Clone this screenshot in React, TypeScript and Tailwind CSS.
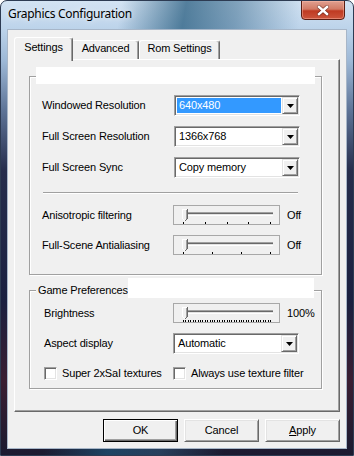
import React from "react";

const sunken =
  "border border-t-[#a0a0a0] border-l-[#a0a0a0] border-r-white border-b-white shadow-[inset_1px_1px_0_#696969,inset_-1px_-1px_0_#e3e3e3]";

function DropButton() {
  return (
    <div className="w-[16px] h-full bg-[#f0f0f0] border border-t-[#e3e3e3] border-l-[#e3e3e3] border-r-[#696969] border-b-[#696969] shadow-[inset_1px_1px_0_#ffffff,inset_-1px_-1px_0_#a0a0a0] flex items-center justify-center">
      <svg width="7" height="4" className="block">
        <polygon points="0,0 7,0 3.5,4" fill="#000" />
      </svg>
    </div>
  );
}

function Combo({ value, selected }: { value: string; selected?: boolean }) {
  return (
    <div className={`w-[126px] h-[21px] bg-white ${sunken} p-[1px] flex`}>
      <div className="flex-1 flex items-center pl-[1px] pr-[1px] py-[1px]">
        <div
          className={`w-full h-full flex items-center pl-[2px] ${
            selected ? "bg-[#3399ff] text-white" : "text-black"
          }`}
        >
          {value}
        </div>
      </div>
      <DropButton />
    </div>
  );
}

function Trackbar({ ticks }: { ticks: number }) {
  const xs = Array.from({ length: ticks }, (_, i) =>
    Math.round(9 + (i * 87) / (ticks - 1))
  );
  return (
    <div className="w-[107px] h-[20px] border border-[#a8a8a8] bg-[#f0f0f0]">
      <svg width="105" height="18" className="block" shapeRendering="crispEdges">
        <rect x="9" y="6" width="90" height="1" fill="#a0a0a0" />
        <rect x="9" y="7" width="90" height="1" fill="#696969" />
        <rect x="9" y="8" width="90" height="1" fill="#e3e3e3" />
        <rect x="9" y="9" width="90" height="1" fill="#ffffff" />
        {xs.map((x, i) => (
          <rect key={i} x={x} y="16" width="1" height="2" fill="#000" />
        ))}
        <polygon points="8,3 14,3 14,12 11,15 8,12" fill="#f0f0f0" />
        <rect x="8" y="3" width="1" height="10" fill="#ffffff" />
        <rect x="8" y="3" width="6" height="1" fill="#ffffff" />
        <rect x="13" y="3" width="1" height="10" fill="#696969" />
        <rect x="12" y="4" width="1" height="9" fill="#a0a0a0" />
        <rect x="12" y="13" width="1" height="1" fill="#696969" />
        <rect x="11" y="14" width="1" height="1" fill="#696969" />
        <rect x="9" y="13" width="1" height="1" fill="#ffffff" />
        <rect x="10" y="14" width="1" height="1" fill="#ffffff" />
      </svg>
    </div>
  );
}

function Checkbox() {
  return <div className={`w-[13px] h-[13px] bg-white ${sunken}`} />;
}

function Button({ label, def, under }: { label: string; def?: boolean; under?: boolean }) {
  return (
    <div
      className={`w-[75px] h-[23px] bg-[#f0f0f0] flex items-center justify-center ${
        def
          ? "border border-black shadow-[inset_1px_1px_0_#ffffff,inset_-1px_-1px_0_#696969,inset_-2px_-2px_0_#a0a0a0]"
          : "border border-t-white border-l-white border-r-[#696969] border-b-[#696969] shadow-[inset_1px_1px_0_#e3e3e3,inset_-1px_-1px_0_#a0a0a0]"
      }`}
    >
      {under ? (
        <span>
          <span className="underline underline-offset-[1px]">{label[0]}</span>
          {label.slice(1)}
        </span>
      ) : (
        label
      )}
    </div>
  );
}

export default function App() {
  return (
    <div className="w-[354px] h-[456px] relative overflow-hidden rounded-t-[7px] border border-[#2d3b52] flex flex-col bg-[linear-gradient(100deg,rgba(0,0,0,0)_28%,rgba(30,85,120,0.7)_43%,rgba(50,100,135,0.5)_55%,rgba(0,0,0,0)_70%),linear-gradient(to_bottom,#d3e3f3_0px,#bcd3ea_28px,#9db8d6_60px,#5d7396_110px,#262d4c_170px,#1b2040_300px,#3a1e32_380px,#1a1a30_456px)] font-['Liberation_Sans',Arial,sans-serif] text-[11px] tracking-[-0.15px] text-black">
      {/* title bar */}
      <div className="h-[28px] relative flex items-start">
        <span className="ml-[7px] mt-[5px] text-[12px] leading-[16px] tracking-[-0.3px] font-['Noto_Sans',sans-serif] text-black [text-shadow:0_0_6px_rgba(255,255,255,0.9)]">
          Graphics Configuration
        </span>
        <div className="absolute right-[8px] top-[-1px] w-[44px] h-[20px] rounded-b-[4px] border border-[#5a1d12] bg-[linear-gradient(to_bottom,#e0a090_0%,#d27a65_45%,#bf3a22_55%,#cc553c_100%)] shadow-[inset_0_0_0_1px_rgba(255,190,175,0.45)] flex items-center justify-center">
          <svg width="14" height="11" className="block">
            <path d="M3 2 L11 9 M11 2 L3 9" stroke="#4a1a12" strokeWidth="4" strokeLinecap="round" opacity="0.55" />
            <path d="M3 2 L11 9 M11 2 L3 9" stroke="#ffffff" strokeWidth="2.4" strokeLinecap="square" />
          </svg>
        </div>
      </div>

      {/* client area */}
      <div className="mx-[6px] mb-[6px] flex-1 bg-[#f0f0f0] border border-[#a7b6c8] flex flex-col">
        {/* tabs */}
        <div className="flex items-end pl-[6px] pt-[7px] h-[29px]">
          <div className="relative z-10 w-[59px] h-[24px] -mb-[2px] bg-[#f0f0f0] border-l border-t border-white border-r border-r-[#696969] rounded-t-[3px] shadow-[inset_-1px_0_0_#a0a0a0] flex justify-center pt-[3px] leading-[13px]">
            Settings
          </div>
          <div className="w-[66px] h-[19px] bg-[#f0f0f0] border-t border-white border-r border-r-[#696969] rounded-tr-[3px] shadow-[inset_-1px_0_0_#a0a0a0] flex justify-center pt-[1px] leading-[13px]">
            Advanced
          </div>
          <div className="w-[81px] h-[19px] bg-[#f0f0f0] border-l border-t border-white border-r border-r-[#696969] rounded-t-[3px] shadow-[inset_-1px_0_0_#a0a0a0] flex justify-center pt-[1px] leading-[13px]">
            Rom Settings
          </div>
        </div>

        {/* tab page */}
        <div className="mx-[6px] h-[353px] border border-t-white border-l-white border-r-[#696969] border-b-[#696969] shadow-[inset_-1px_-1px_0_#a0a0a0] flex flex-col">
          {/* group 1 */}
          <div className="relative ml-[14px] mt-[16px] w-[293px] h-[199px] border border-[#a0a0a0] shadow-[inset_1px_1px_0_#ffffff,1px_1px_0_#ffffff] flex flex-col pl-[12px] pt-[18px]">
            <div className="absolute left-[6px] top-[-10px] w-[279px] h-[17px] bg-white" />
            <div className="flex flex-col gap-[10px]">
              <div className="flex items-center">
                <span className="w-[132px]">Windowed Resolution</span>
                <Combo value="640x480" selected />
              </div>
              <div className="flex items-center">
                <span className="w-[132px]">Full Screen Resolution</span>
                <Combo value="1366x768" />
              </div>
              <div className="flex items-center">
                <span className="w-[132px]">Full Screen Sync</span>
                <Combo value="Copy memory" />
              </div>
            </div>
            <div className="ml-[1px] mt-[14px] w-[255px] h-[2px] border-t border-[#a0a0a0] border-b border-b-white" />
            <div className="flex flex-col gap-[10px] mt-[11px]">
              <div className="flex items-center">
                <span className="w-[131px]">Anisotropic filtering</span>
                <Trackbar ticks={5} />
                <span className="ml-[7px]">Off</span>
              </div>
              <div className="flex items-center">
                <span className="w-[131px]">Full-Scene Antialiasing</span>
                <Trackbar ticks={4} />
                <span className="ml-[7px]">Off</span>
              </div>
            </div>
          </div>

          {/* group 2 */}
          <div className="relative ml-[14px] mt-[15px] w-[293px] h-[99px] border border-[#a0a0a0] shadow-[inset_1px_1px_0_#ffffff,1px_1px_0_#ffffff] flex flex-col pl-[14px] pt-[12px]">
            <span className="absolute left-[6px] top-[-7px] px-[2px] bg-[#f0f0f0] leading-[13px]">
              Game Preferences
            </span>
            <div className="absolute left-[98px] top-[-13px] w-[186px] h-[20px] bg-white" />
            <div className="flex items-center">
              <span className="w-[129px]">Brightness</span>
              <Trackbar ticks={37} />
              <span className="ml-[7px]">100%</span>
            </div>
            <div className="flex items-center mt-[10px]">
              <span className="w-[129px]">Aspect display</span>
              <Combo value="Automatic" />
            </div>
            <div className="flex items-center mt-[11px]">
              <Checkbox />
              <span className="ml-[5px] w-[111px]">Super 2xSaI textures</span>
              <Checkbox />
              <span className="ml-[5px]">Always use texture filter</span>
            </div>
          </div>
        </div>

        {/* buttons */}
        <div className="flex justify-end gap-[6px] pr-[6px] mt-[7px]">
          <Button label="OK" def />
          <Button label="Cancel" />
          <Button label="Apply" under />
        </div>
      </div>
    </div>
  );
}
